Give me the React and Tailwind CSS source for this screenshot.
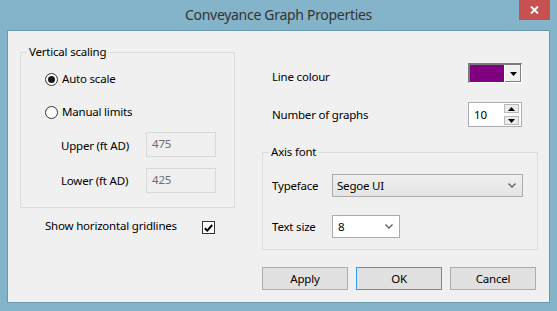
import React from "react";

const Chevron = () => (
  <svg width="8" height="5" viewBox="0 0 8 5" className="shrink-0">
    <path d="M0.5 0.5 L4 4 L7.5 0.5" fill="none" stroke="#606060" strokeWidth="1.4" />
  </svg>
);

const Tri = ({ up }) => (
  <svg width="7" height="4" viewBox="0 0 7 4">
    <path d={up ? "M0 4 L3.5 0 L7 4 Z" : "M0 0 L7 0 L3.5 4 Z"} fill="#000" />
  </svg>
);

const Radio = ({ checked, label }) => (
  <div className="flex items-center h-[16px]">
    <div className="w-[13px] h-[13px] rounded-full border border-[#333] bg-white flex items-center justify-center">
      {checked && <div className="w-[7px] h-[7px] rounded-full bg-[#1a1a1a]" />}
    </div>
    <span className="ml-[4px]">{label}</span>
  </div>
);

const LimitRow = ({ label, value, labelTop }) => (
  <div className="flex items-start h-[25px] pl-[16px]">
    <span className={`w-[85px] ${labelTop}`}>{label}</span>
    <div className="w-[70px] h-[25px] border border-[#d9d9d9] bg-[#f0f0f0] text-[#6d6d6d] pl-[5px] pt-[3px] leading-[16px]">
      {value}
    </div>
  </div>
);

const Button = ({ children, primary }) => (
  <button
    className={`w-[86px] h-[23px] border bg-[#e1e1e1] text-black leading-[16px] ${
      primary ? "border-[#3399ff]" : "border-[#adadad]"
    }`}
  >
    {children}
  </button>
);

export default function App() {
  return (
    <div className="w-[557px] h-[311px] bg-[#84b4c9] flex flex-col font-['Segoe_UI','Noto_Sans',sans-serif] text-[11.5px] tracking-[-0.2px] leading-[16px] text-black select-none">
      {/* title bar */}
      <div className="h-[30px] relative flex items-center justify-center">
        <span className="text-[14px] tracking-[-0.3px] text-[#333] -mt-[1px]">Conveyance Graph Properties</span>
        <div className="absolute top-0 right-[7px] w-[31px] h-[20px] bg-[#c75050] flex items-center justify-center">
          <svg width="9" height="8" viewBox="0 0 9 8">
            <path d="M1 0.5 L8 7.5 M8 0.5 L1 7.5" stroke="#fff" strokeWidth="2" />
          </svg>
        </div>
      </div>

      {/* client */}
      <div className="mx-[7px] h-[273px] border border-[#6a98ad] bg-[#f0f0f0] flex pl-[12px]">
        {/* left column */}
        <div className="w-[215px] flex flex-col pt-[13px]">
          <fieldset className="border border-[#dcdcdc] pb-[14px]">
            <legend className="ml-[6px] px-[2px] leading-[16px]">Vertical scaling</legend>
            <div className="pl-[24px]">
              <div className="mt-[11px]">
                <Radio checked label="Auto scale" />
              </div>
              <div className="mt-[17px]">
                <Radio label="Manual limits" />
              </div>
              <div className="mt-[12px]">
                <LimitRow label="Upper (ft AD)" value="475" labelTop="mt-[6px]" />
              </div>
              <div className="mt-[11px]">
                <LimitRow label="Lower (ft AD)" value="425" labelTop="mt-[5px]" />
              </div>
            </div>
          </fieldset>
          <div className="flex items-start mt-[10px] pl-[25px]">
            <span className="w-[157px]">Show horizontal gridlines</span>
            <div className="mt-[3px] w-[13px] h-[13px] border border-[#333] bg-white flex items-center justify-center">
              <svg width="9" height="8" viewBox="0 0 9 8">
                <path d="M0.8 4.2 L3.3 6.6 L8.2 1" fill="none" stroke="#000" strokeWidth="2" />
              </svg>
            </div>
          </div>
        </div>

        {/* right column */}
        <div className="w-[276px] ml-[27px] flex flex-col">
          <div className="flex items-start mt-[32px] pl-[10px] h-[20px]">
            <span className="w-[196px] mt-[6px]">Line colour</span>
            <div className="w-[54px] h-[20px] flex border-t-2 border-l-2 border-t-[#7a7a7a] border-l-[#7a7a7a] border-b border-r border-b-white border-r-white bg-[#7a7a7a]">
              <div className="flex-1 bg-[#800080]" />
              <div className="w-[17px] bg-[#f0f0f0] border-l border-l-white flex items-center justify-center shadow-[inset_-1px_-1px_0_#808080]">
                <Tri />
              </div>
            </div>
          </div>

          <div className="flex items-start mt-[19px] pl-[10px] h-[25px]">
            <span className="w-[196px] mt-[5px]">Number of graphs</span>
            <div className="w-[54px] h-[25px] border border-[#abadb3] bg-white flex">
              <span className="flex-1 pl-[5px] pt-[4px]">10</span>
              <div className="w-[15px] mr-[2px] flex flex-col justify-center gap-[3px]">
                <div className="h-[9px] border border-[#b8b8b8] bg-[#ececec] flex items-center justify-center">
                  <Tri up />
                </div>
                <div className="h-[9px] border border-[#b8b8b8] bg-[#ececec] flex items-center justify-center">
                  <Tri />
                </div>
              </div>
            </div>
          </div>

          <fieldset className="border border-[#dcdcdc] mt-[17px] pb-[11px]">
            <legend className="ml-[6px] px-[2px] leading-[16px]">Axis font</legend>
            <div className="pl-[9px]">
              <div className="flex items-start mt-[14px] h-[23px]">
                <span className="w-[60px] mt-[4px]">Typeface</span>
                <div className="w-[191px] h-[23px] border border-[#acacac] bg-gradient-to-b from-[#efefef] to-[#e5e5e5] flex items-center pl-[4px] pr-[6px]">
                  <span className="flex-1">Segoe UI</span>
                  <Chevron />
                </div>
              </div>
              <div className="flex items-start mt-[18px] h-[23px]">
                <span className="w-[60px] mt-[4px]">Text size</span>
                <div className="w-[68px] h-[23px] border border-[#acacac] bg-white flex items-center pl-[5px] pr-[6px]">
                  <span className="flex-1">8</span>
                  <Chevron />
                </div>
              </div>
            </div>
          </fieldset>

          <div className="flex gap-[8px] mt-[17px]">
            <Button>Apply</Button>
            <Button primary>OK</Button>
            <Button>Cancel</Button>
          </div>
        </div>
      </div>
    </div>
  );
}
